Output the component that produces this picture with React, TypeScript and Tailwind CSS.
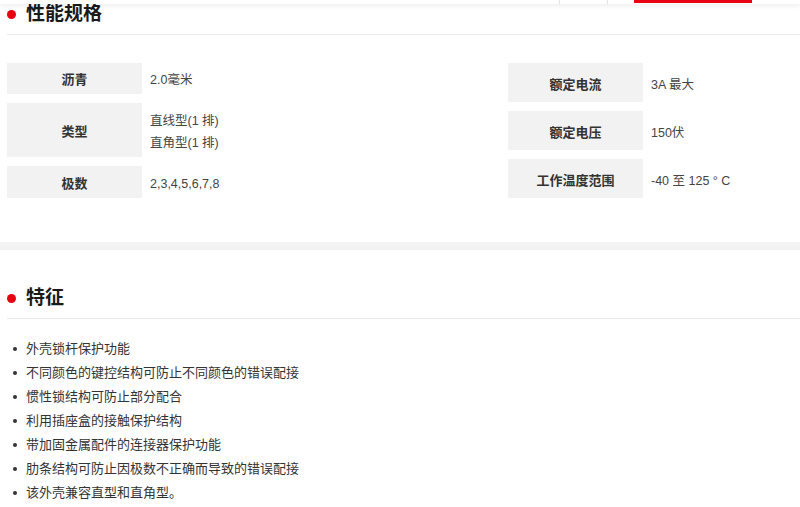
import React from 'react';

const FONT = { fontFamily: '"Liberation Sans", "Noto Sans CJK SC", sans-serif' };

const leftSpecs = [
  { label: '沥青', values: ['2.0毫米'], h: 'h-[31px]' },
  { label: '类型', values: ['直线型(1 排)', '直角型(1 排)'], h: 'h-[54px]' },
  { label: '极数', values: ['2,3,4,5,6,7,8'], h: 'h-[32px]' },
];

const rightSpecs = [
  { label: '额定电流', value: '3A 最大' },
  { label: '额定电压', value: '150伏' },
  { label: '工作温度范围', value: '-40 至 125 ° C' },
];

const features = [
  '外壳锁杆保护功能',
  '不同颜色的键控结构可防止不同颜色的错误配接',
  '惯性锁结构可防止部分配合',
  '利用插座盒的接触保护结构',
  '带加固金属配件的连接器保护功能',
  '肋条结构可防止因极数不正确而导致的错误配接',
  '该外壳兼容直型和直角型。',
];

function SectionTitle({ title }: { title: string }) {
  return (
    <div className="flex items-center gap-[10px] border-b border-[#ececec] pb-[6px]">
      <span className="w-[9px] h-[9px] rounded-full bg-[#e60012]" />
      <h2 className="text-[19px] leading-[28px] font-bold text-[#1a1a1a]">{title}</h2>
    </div>
  );
}

export default function App() {
  return (
    <div className="relative w-[800px] h-[507px] overflow-hidden bg-white text-[#333]" style={FONT}>
      {/* sticky tab bar, scrolled mostly out of view */}
      <div className="absolute top-0 left-0 right-0 h-[4px] bg-white shadow-[0_2px_4px_rgba(0,0,0,0.08)] z-10">
        <div className="absolute left-[559px] top-0 h-full w-px bg-[#e5e5e5]" />
        <div className="absolute left-[607px] top-0 h-full w-px bg-[#e5e5e5]" />
        <div className="absolute left-[634px] top-0 h-[3px] w-[118px] bg-[#e60012]" />
      </div>

      <section className="pl-[7px] pb-[44px]">
        <SectionTitle title="性能规格" />
        <div className="flex mt-[28px]">
          <div className="w-[501px] flex flex-col gap-[9px]">
            {leftSpecs.map((s) => (
              <div key={s.label} className={`flex ${s.h}`}>
                <div className="w-[135px] bg-[#f2f2f2] flex items-center justify-center pt-[3px] text-[13px] font-bold text-[#333]">
                  {s.label}
                </div>
                <div className="pl-2 flex flex-col justify-center pt-[3px] text-[12.5px] leading-[22px] text-[#444]">
                  {s.values.map((v) => (
                    <span key={v}>{v}</span>
                  ))}
                </div>
              </div>
            ))}
          </div>
          <div className="flex flex-col gap-[9px]">
            {rightSpecs.map((s) => (
              <div key={s.label} className="flex h-[39px]">
                <div className="w-[135px] bg-[#f2f2f2] flex items-center justify-center pt-[5px] text-[13px] font-bold text-[#333]">
                  {s.label}
                </div>
                <div className="pl-2 flex items-center pt-[5px] text-[12.5px] text-[#444]">{s.value}</div>
              </div>
            ))}
          </div>
        </div>
      </section>

      <div className="h-[8px] bg-[#f3f3f3]" />

      <section className="pl-[7px] pt-[34px]">
        <SectionTitle title="特征" />
        <ul className="mt-[18px]">
          {features.map((f) => (
            <li key={f} className="flex items-center h-[24px] text-[13px] text-[#333]">
              <span className="w-[4px] h-[4px] rounded-full bg-[#333] ml-[6px] mr-[9px]" />
              {f}
            </li>
          ))}
        </ul>
      </section>
    </div>
  );
}
